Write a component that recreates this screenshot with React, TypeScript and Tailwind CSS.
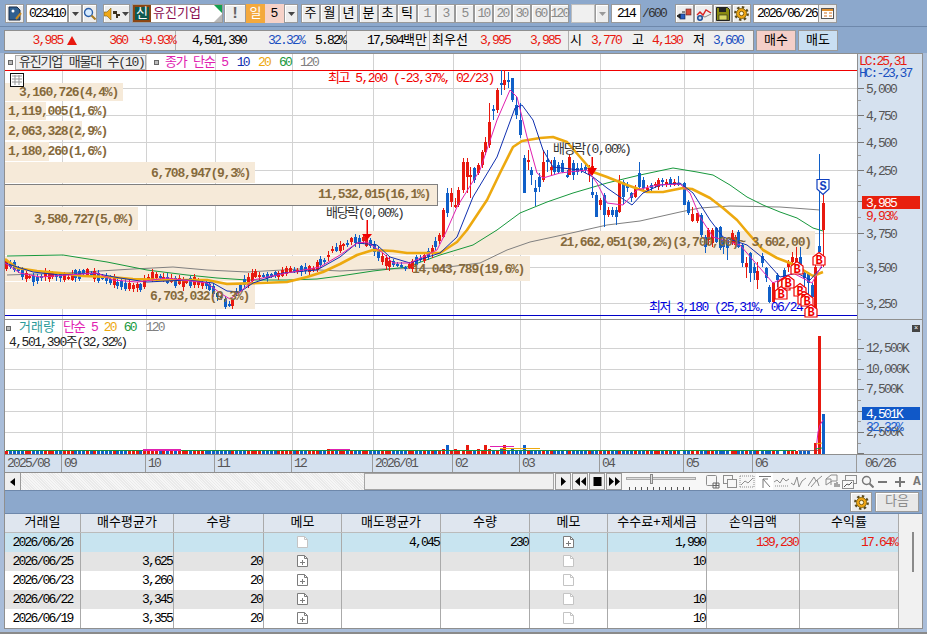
import type { ReactNode } from 'react'

type C = [number, number, number, number, number, string]

// left part of the price path, page pixels
const pricePath: [number, number][] = [[5,263],[15,268],[25,277],[35,280],[45,275],[60,276],[70,277],[85,272],[100,278],[115,283],[130,285],[140,289],[150,276],[170,281],[185,282],[195,282],[210,287],[220,297],[228,305],[233,303],[237,290],[245,281],[255,275],[265,277],[275,275],[290,271],[300,270],[315,267],[325,260],[333,250],[345,243],[355,240],[365,240],[370,243],[378,255],[385,263],[395,265],[405,268],[415,263],[425,257],[432,250],[440,238]]

const midCandles: C[] = [[310,450,530,445,535,'r'],[322,400,460,385,470,'b'],[333,400,425,385,440,'r'],[345,435,440,415,445,'r'],[355,390,435,380,440,'r'],[368,305,390,295,400,'r'],[380,305,350,295,400,'r'],[391,345,350,320,415,'r'],[402,325,360,320,370,'b'],[413,315,340,310,345,'r'],[425,275,315,270,325,'r'],[436,245,275,230,285,'r'],[448,185,255,130,265,'r'],[460,148,152,135,180,'b'],[471,90,150,85,160,'r'],[482,68,74,30,105,'b'],[493,60,75,30,90,'r'],[505,60,64,35,85,'b'],[517,55,120,55,125,'b'],[529,135,165,110,178,'b'],[541,180,225,130,235,'b'],[551,295,400,285,400,'b'],[563,300,305,270,330,'r'],[574,330,345,320,375,'b'],[586,385,395,360,437,'b'],[598,350,380,340,395,'b'],[610,305,360,270,365,'r'],[620,300,304,270,335,'b'],[632,320,330,300,345,'r'],[642,300,335,290,345,'b'],[654,315,335,305,340,'b'],[667,310,335,300,340,'b'],[680,345,350,330,355,'b'],[688,290,345,285,345,'r'],[700,310,345,300,360,'b'],[712,325,335,310,345,'b'],[724,325,330,310,340,'b'],[736,320,330,310,340,'b'],[748,320,345,315,365,'r'],[757,318,325,290,345,'r'],[757,395,405,355,415,'b'],[769,405,470,395,470,'b'],[780,420,435,415,450,'r'],[793,405,465,400,500,'b'],[805,450,465,440,470,'r'],[817,450,465,440,470,'b'],[827,450,470,440,495,'b'],[838,365,455,345,460,'r'],[850,365,410,360,435,'b'],[862,375,385,365,395,'b'],[874,400,415,395,425,'b'],[886,380,410,375,415,'r'],[896,340,380,305,390,'b'],[908,360,385,350,395,'b'],[920,385,390,375,400,'r'],[932,375,385,370,395,'b'],[945,372,378,365,385,'r'],[955,360,380,355,390,'r'],[967,360,366,355,380,'b'],[978,365,375,358,380,'r'],[990,358,375,352,380,'b'],[1002,365,375,358,378,'r'],[1013,370,373,348,378,'b']]

const endCandles: C[] = [[12,160,225,155,225,'b'],[25,215,250,210,255,'b'],[37,252,272,232,275,'r'],[50,250,272,248,278,'r'],[62,255,315,250,320,'b'],[74,320,350,315,368,'b'],[85,300,330,295,345,'r'],[95,300,340,295,350,'r'],[107,295,335,290,340,'b'],[119,290,355,288,360,'b'],[130,330,352,325,372,'b'],[142,330,355,325,390,'b'],[155,310,340,300,345,'r'],[165,320,345,315,350,'r'],[175,305,350,300,355,'b'],[187,345,400,340,412,'b'],[198,400,410,380,445,'r'],[210,370,430,365,455,'b'],[222,410,430,400,450,'b'],[232,422,450,395,478,'r'],[245,378,400,370,410,'b'],[257,415,445,410,455,'b'],[268,470,515,465,520,'b'],[280,460,515,455,520,'r'],[291,435,450,430,470,'b'],[313,420,440,415,455,'b'],[325,395,410,390,425,'r'],[337,380,395,365,410,'r'],[349,385,400,350,430,'r'],[361,380,420,350,430,'b'],[373,430,445,425,470,'b'],[385,430,460,425,500,'b'],[395,465,500,460,510,'b'],[406,410,540,405,545,'r'],[418,348,365,72,390,'b'],[430,220,300,190,410,'r']]

function interp(x: number) {
  for (let i = 1; i < pricePath.length; i++) {
    const [x0, y0] = pricePath[i - 1]
    const [x1, y1] = pricePath[i]
    if (x <= x1) return y0 + ((y1 - y0) * (x - x0)) / (x1 - x0)
  }
  return pricePath[pricePath.length - 1][1]
}

function buildCandles() {
  let seed = 17
  const rnd = () => {
    seed = (seed * 9301 + 49297) % 233280
    return seed / 233280
  }
  const out: { x: number; top: number; bot: number; hi: number; lo: number; c: string }[] = []
  for (let i = 0; i < 114; i++) {
    const x = 6.4 + 3.83 * i
    const mid = interp(x) + (rnd() - 0.5) * 3
    const h = 1 + Math.floor(rnd() * 4)
    out.push({ x, top: mid - h, bot: mid + h, hi: mid - h - 1 - rnd() * 3, lo: mid + h + 1 + rnd() * 3, c: rnd() > 0.5 ? 'r' : 'b' })
  }
  midCandles.forEach(([X, t, b, hi, lo, c]) => out.push({ x: 340 + X / 3, top: 60 + t / 3, bot: 60 + b / 3, hi: 60 + hi / 3, lo: 60 + lo / 3, c }))
  endCandles.forEach(([X, t, b, hi, lo, c]) => out.push({ x: 680 + X / 3, top: 130 + t / 3, bot: 130 + b / 3, hi: 130 + hi / 3, lo: 130 + lo / 3, c }))
  return out
}

const candles = buildCandles()
const RED = '#e8190f'
const BLUE = '#1060c8'

const ma5 = '5,263 20,273 40,277 67,275 97,273 113,280 137,282 167,278 207,283 220,293 230,299 240,292 253,280 287,273 320,267 340,255 357,243 367,242 383,253 393,263 410,263 437,250 447,230 457,207 480,170 497,120 510,90 517,97 527,137 537,173 543,178 560,173 587,170 597,183 607,203 623,205 637,190 657,185 680,184 690,193 700,217 713,237 740,245 753,260 773,283 793,273 812,283 822,265'
const ma10 = '5,263 33,272 60,275 93,273 120,278 147,282 187,280 213,283 227,291 240,292 253,283 283,273 317,270 340,257 357,243 377,245 390,257 410,263 440,253 457,237 473,197 497,157 515,108 522,105 533,120 543,150 553,167 580,170 593,177 607,188 620,197 632,205 643,193 660,185 680,183 693,193 710,220 723,237 747,245 763,258 780,277 797,273 810,280 822,267'
const ma20 = '5,259 17,268 37,271 60,273 83,276 110,277 133,279 167,280 207,280 227,284 260,283 287,282 307,277 323,272 340,264 357,255 373,250 393,251 407,253 440,253 457,242 467,230 487,200 500,173 513,147 522,141 540,138 553,137 567,142 580,157 593,172 607,177 627,185 647,192 663,192 683,188 692,189 710,198 723,208 737,220 748,233 763,250 777,258 790,263 803,270 813,276 823,272'
const ma60 = '7,256 63,255 107,262 147,270 187,275 217,278 247,280 287,280 317,279 340,276 373,271 407,267 440,255 473,245 497,230 520,213 547,202 573,193 607,183 640,175 673,168 697,172 713,175 730,185 747,197 763,205 780,212 797,218 813,228 823,231'
const ma120 = '7,275 67,273 100,271 133,269 173,267 207,270 247,272 300,269 340,271 383,269 440,268 480,263 507,250 530,242 567,234 607,225 640,221 680,212 700,208 730,206 780,207 820,210'

const vLines = [62, 146, 215, 292, 373, 453, 520, 600, 684, 753]
const priceTicks: [number, string][] = [[88, '5,000'], [115, '4,750'], [142, '4,500'], [170, '4,250'], [233, '3,750'], [267, '3,500'], [303, '3,250']]
const bands: [number, number, number, number][] = [[5, 83, 118, 18], [5, 102, 41, 18], [5, 121, 77, 19], [5, 142, 44, 19], [5, 162, 250, 21], [5, 207, 133, 23], [5, 231, 810, 24], [5, 256, 525, 25], [5, 282, 250, 27]]
const volLabels: [number, number, string][] = [
  [19, 96, '3,160,726(4,4%)'], [8, 115, '1,119,005(1,6%)'], [8, 135, '2,063,328(2,9%)'], [8, 155, '1,180,260(1,6%)'],
  [151, 177, '6,708,947(9,3%)'], [318, 198, '11,532,015(16,1%)'], [34, 223, '3,580,727(5,0%)'],
  [560, 246, '21,662,051(30,2%)(3,700,00)~ 3,602,00)'], [412, 273, '14,043,789(19,6%)'], [150, 300, '6,703,032(9,3%)'],
]
const buyMarks: [number, number][] = [[784, 284], [788, 282], [781, 293], [797, 268], [800, 290], [804, 298], [807, 300], [811, 311], [819, 259]]

function Btn({ w, children, muted, className }: { w: string; children?: ReactNode; muted?: boolean; className?: string }) {
  return (
    <div className={`${w} ${className ?? ''} flex h-[19px] shrink-0 items-center justify-center border border-[#9a9a9a] bg-[#ededed] shadow-[inset_1px_1px_0_#fff] ${muted ? 'text-[#8a8a8a]' : 'text-black'}`}>
      {children}
    </div>
  )
}

function Caret({ muted }: { muted?: boolean }) {
  return (
    <svg width="7" height="4" viewBox="0 0 7 4">
      <path d="M0 0h7L3.500 4z" fill={muted ? '#999' : '#444'} />
    </svg>
  )
}

function Gear() {
  return (
    <svg width="15" height="15" viewBox="0 0 15 15">
      <circle cx="7.500" cy="7.500" r="6.200" fill="none" stroke="#5a4a20" strokeWidth="2.400" strokeDasharray="2.400 2.400" />
      <circle cx="7.500" cy="7.500" r="5" fill="#f4a814" stroke="#8a6a10" />
      <circle cx="7.500" cy="7.500" r="2.200" fill="#fff6d8" stroke="#7a5a10" />
    </svg>
  )
}

function DocIcon({ plus, faint }: { plus?: boolean; faint?: boolean }) {
  const stroke = faint ? '#c4c4c4' : '#7d7d7d'
  return (
    <svg width="11" height="12" viewBox="0 0 11 12" className="mx-auto mt-[3px] block">
      <path d="M.5.5h7l3 3v8H.5z" fill="#fff" stroke={stroke} />
      <path d="M7.500.5v3h3" fill="none" stroke={stroke} />
      {plus && <path d="M5.500 5v5M3 7.500h5" stroke={stroke} />}
    </svg>
  )
}

function Toolbar() {
  return (
    <div className="flex h-[27px] items-start border-b border-[#6e88ab] pt-1 pl-[5px]">
      <Btn w="w-[19px]">
        <svg width="14" height="15" viewBox="0 0 14 15">
          <path d="M1 1h8l3 3v10H1z" fill="#2f5f8f" stroke="#1c2f4a" />
          <circle cx="5" cy="5" r="1.500" fill="#fff" />
          <path d="M8 13l5-6" stroke="#c88a20" strokeWidth="2" />
        </svg>
      </Btn>
      <div className="ml-[2px] flex h-[19px] w-[42px] items-center justify-center border border-[#9a9a9a] bg-white tracking-[-1.8px]">023410</div>
      <Btn w="w-[14px]"><Caret /></Btn>
      <Btn w="w-[15px]">
        <svg width="13" height="13" viewBox="0 0 13 13">
          <circle cx="5.500" cy="5.500" r="4" fill="#d8ecff" stroke="#2a5ea8" strokeWidth="1.400" />
          <path d="M8.500 8.500l4 4" stroke="#a87a20" strokeWidth="2" />
        </svg>
      </Btn>
      <Btn w="w-[27px]" className="ml-[6px] gap-[2px]">
        <svg width="16" height="12" viewBox="0 0 16 12">
          <path d="M0 4h3l4-4v12L3 8H0z" fill="#f0a818" stroke="#7a5a10" strokeWidth=".6" />
          <path d="M9 3h4v3h3v2h-2v2h-2V6H9z" fill="#3a3020" />
        </svg>
        <Caret />
      </Btn>
      <div className="ml-[2px] flex h-[19px] w-[91px] shrink-0 border border-[#9a9a9a] bg-white">
        <div className="flex w-[18px] items-center justify-center border-2 border-[#8b4513] bg-[#0f5a50] leading-none text-white">신</div>
        <div className="relative flex-1 pl-[2px] leading-[17px] text-[#8a0f52]">
          유진기업
          <div className="absolute top-0 right-0 size-0 border-t-[8px] border-l-[8px] border-t-[#12a050] border-l-transparent" />
          <div className="absolute right-0 bottom-0 size-0 border-b-[8px] border-l-[8px] border-b-[#b8b8b8] border-l-transparent" />
        </div>
      </div>
      <Btn w="w-[22px]" className="ml-[1px]"><span className="text-[16px] font-bold text-[#666]">!</span></Btn>
      <div className="flex h-[19px] w-[19px] items-center justify-center bg-[#f4a93c] text-white">일</div>
      <div className="flex h-[19px] w-[19px] items-center justify-center bg-[#f6d2c8]">5</div>
      <Btn w="w-[14px]"><Caret /></Btn>
      <Btn w="w-[19px]" className="ml-[3px]">주</Btn>
      <Btn w="w-[19px]">월</Btn>
      <Btn w="w-[19px]">년</Btn>
      <Btn w="w-[19px]" className="ml-[1px]">분</Btn>
      <Btn w="w-[19px]">초</Btn>
      <Btn w="w-[20px]">틱</Btn>
      {['1', '3', '5', '10', '20', '30', '60', '120'].map((n) => (
        <Btn key={n} w="w-[19px] tracking-[-1.8px]" muted>{n}</Btn>
      ))}
      <div className="ml-[2px] h-[19px] w-[24px] border border-[#bdbdbd] bg-[#f0f0f0]" />
      <Btn w="w-[14px]"><Caret muted /></Btn>
      <div className="ml-[2px] flex h-[19px] w-[30px] items-center justify-center border border-[#9a9a9a] bg-white tracking-[-1.8px]">214</div>
      <span className="ml-[1px] w-[33px] leading-[19px] tracking-[-1.8px] text-[#333]">/600</span>
      <Btn w="w-[19px]">
        <svg width="16" height="14" viewBox="0 0 16 14">
          <rect x="9" y="2" width="5" height="6" fill="#d84a3a" stroke="#602020" strokeWidth=".6" />
          <rect x="3" y="7" width="5" height="5" fill="#2a5ec0" stroke="#102050" strokeWidth=".6" />
          <path d="M0 9l3-2v4zM8 5l-3 0" fill="#222" stroke="#222" />
        </svg>
      </Btn>
      <Btn w="w-[19px]">
        <svg width="16" height="14" viewBox="0 0 16 14">
          <path d="M1 8l3-3 3 3 3-5 5 3" fill="none" stroke="#d82020" strokeWidth="1.400" />
          <path d="M1 11l4-2 4 1 6-3" fill="none" stroke="#888" />
          <circle cx="4" cy="11" r="3" fill="#1e4f9a" />
          <path d="M2.500 11h3M4 9.500v3" stroke="#fff" />
        </svg>
      </Btn>
      <Btn w="w-[19px]" className="!bg-[#d8d8d8]">
        <svg width="14" height="14" viewBox="0 0 14 14">
          <path d="M.5.5h11l2 2v11H.5z" fill="#8a8a10" stroke="#222" />
          <rect x="3" y="1" width="7" height="4" fill="#222" />
          <rect x="3" y="8" width="8" height="5" fill="#d8d860" stroke="#222" strokeWidth=".6" />
        </svg>
      </Btn>
      <Btn w="w-[19px]"><Gear /></Btn>
      <div className="ml-[2px] flex h-[19px] w-[84px] items-center border border-[#9a9a9a] bg-white pl-[3px] tracking-[-1.8px]">
        2026/06/26
        <div className="ml-auto flex h-[17px] w-[18px] items-center justify-center border-l border-[#9a9a9a] bg-[#ededed]">
          <svg width="13" height="11" viewBox="0 0 13 11">
            <rect x=".5" y=".5" width="12" height="10" fill="#fff" stroke="#555" />
            <rect x="1" y="1" width="11" height="2" fill="#e09030" />
            <path d="M3 5h3M8 5h3M3 8h3M8 8h3" stroke="#d07020" />
          </svg>
        </div>
      </div>
    </div>
  )
}

function QuoteBar() {
  return (
    <div className="mt-[3px] ml-1 flex h-[21px] items-stretch leading-[19px] tracking-[-1.8px]">
      <div className="flex w-[750px] border border-[#8f8f8f] bg-[#efefef]">
        <div className="flex w-[171px] items-center border-r border-[#b0b0b0]">
          <span className="w-[59px] text-right text-[#e8190f]">3,985</span>
          <div className="mr-[1px] ml-[4px] size-0 border-x-[5px] border-b-[9px] border-x-transparent border-b-[#e8190f]" />
          <span className="w-[51px] text-right text-[#e8190f]">360</span>
          <span className="w-[49px] text-right text-[#e8190f]">+9.93%</span>
        </div>
        <div className="flex w-[171px] border-r border-[#b0b0b0]">
          <span className="w-[70px] text-right">4,501,390</span>
          <span className="w-[58px] text-right text-[#1a50c0]">32.32%</span>
          <span className="w-[41px] text-right">5.82%</span>
        </div>
        <div className="flex w-[83px] border-r border-[#b0b0b0]">
          <span className="w-[80px] text-right">17,504<span className="tracking-normal">백만</span></span>
        </div>
        <div className="flex w-[139px] border-r border-[#b0b0b0]">
          <span className="ml-[2px] w-[44px] tracking-normal">최우선</span>
          <span className="w-[34px] text-right text-[#e8190f]">3,995</span>
          <span className="w-[50px] text-right text-[#e8190f]">3,985</span>
        </div>
        <div className="flex">
          <span className="ml-[1px] w-[13px] tracking-normal">시</span>
          <span className="w-[38px] text-right text-[#e8190f]">3,770</span>
          <span className="ml-[11px] w-[13px] tracking-normal">고</span>
          <span className="w-[37px] text-right text-[#e8190f]">4,130</span>
          <span className="ml-[11px] w-[13px] tracking-normal">저</span>
          <span className="w-[37px] text-right text-[#1a50c0]">3,600</span>
        </div>
      </div>
      <div className="ml-[2px] flex w-[40px] items-center justify-center border border-[#9a9a9a] bg-[#f4cfc8] tracking-normal">매수</div>
      <div className="ml-[2px] flex w-[40px] items-center justify-center border border-[#9a9a9a] bg-[#c9dff2] tracking-normal">매도</div>
    </div>
  )
}

function PricePane() {
  return (
    <div className="flex h-[266px] border-b border-[#8f8f8f]">
      <div className="relative w-[852px] bg-white">
        <svg width="852" height="265" viewBox="5 54 852 265" className="absolute inset-0">
          {vLines.map((x) => <line key={x} x1={x + 0.5} x2={x + 0.5} y1="54" y2="319" stroke="#d2d2d2" strokeWidth="1" />)}
          {[88, 115, 142, 170, 201, 233, 267, 303].map((y) => <line key={y} x1="5" x2="857" y1={y + 0.5} y2={y + 0.5} stroke="#d2d2d2" />)}
          {bands.map(([x, y, w, h], i) => <rect key={i} x={x} y={y} width={w} height={h} fill="#f6ead9" />)}
          <rect x="4" y="184.500" width="433.500" height="21" fill="#f6ead9" stroke="#808080" />
          <line x1="5" x2="857" y1="70.500" y2="70.500" stroke="#f00000" />
          <line x1="5" x2="857" y1="315.500" y2="315.500" stroke="#0000c8" />
          <polyline points={ma120} fill="none" stroke="#808080" />
          <polyline points={ma60} fill="none" stroke="#17983c" />
          <g shapeRendering="crispEdges">
            {candles.map((k, i) => {
              const x = Math.round(k.x)
              const fill = k.c === 'r' ? RED : BLUE
              return (
                <g key={i}>
                  <rect x={x} y={k.hi} width="1" height={k.lo - k.hi} fill={fill} />
                  <rect x={x - 1} y={k.top} width="3" height={Math.max(2, k.bot - k.top)} fill={fill} />
                </g>
              )
            })}
          </g>
          <polyline points={ma20} fill="none" stroke="#eda90f" strokeWidth="2.600" strokeLinejoin="round" />
          <polyline points={ma10} fill="none" stroke="#1030b0" />
          <polyline points={ma5} fill="none" stroke="#e020b0" />
          {volLabels.map(([x, y, t]) => (
            <text key={t} x={x} y={y} fill="#866a3c" fontWeight="700" className="tracking-[-1.2px]">{t}</text>
          ))}
          <text x="328" y="82" fill="#f00000" className="tracking-[-1.5px]">최고 5,200 (-23,37%, 02/23)</text>
          <text x="326" y="217" fill="#333" className="tracking-[-1.3px]">배당락(0,00%)</text>
          <text x="553" y="153" fill="#333" className="tracking-[-1.3px]">배당락(0,00%)</text>
          <text x="649" y="311" fill="#0000e0" className="tracking-[-1.5px]">최저 3,180 (25,31%, 06/24)</text>
          <path d="M366.500 220h1.500v14h4l-5 6-5-6h4.500z" fill="#f00000" />
          <path d="M591.500 157h1.500v11h4l-5 8-5-8h4.500z" fill="#f00000" />
          {buyMarks.map(([x, y], i) => (
            <g key={i}>
              <path d={`M${x} ${y - 6.5}l6 4.500v8h-12v-8z`} fill="#fff" stroke="#f00000" strokeWidth="1.200" />
              <text x={x} y={y + 5} textAnchor="middle" fill="#f00000" fontSize="12" fontWeight="700" className="tracking-normal">B</text>
            </g>
          ))}
          <path d="M817 179.500h12v9.500l-6 5.500-6-5.500z" fill="#fff" stroke="#1040c0" strokeWidth="1.200" />
          <text x="823" y="190" textAnchor="middle" fill="#1040c0" fontSize="12" fontWeight="700" className="tracking-normal">S</text>
          <rect x="10.500" y="73.500" width="13" height="13" fill="#fff" stroke="#111" />
          <path d="M12 76h10M12 79h10M12 82h10M15 75v10M19 75v10" stroke="#999" />
        </svg>
        <div className="absolute top-px left-[3px] flex items-center leading-[15px]">
          <div className="size-[5px] border border-[#666] bg-[#bbb]" />
          <div className="ml-[2px] flex h-[15px] w-[131px] items-center border border-[#aaa] bg-[#efefef] pl-[3px] tracking-[-1.2px] text-[#333]">유진기업 매물대 수(10)</div>
          <div className="ml-[8px] size-[5px] border border-[#666] bg-[#bbb]" />
          <span className="ml-[6px] tracking-[-1.2px] text-[#e020b0]">종가 단순 5</span>
          <span className="ml-[9px] tracking-[-1.8px] text-[#1030b0]">10</span>
          <span className="ml-[9px] tracking-[-1.8px] text-[#eda90f]">20</span>
          <span className="ml-[9px] tracking-[-1.8px] text-[#17983c]">60</span>
          <span className="ml-[9px] tracking-[-1.8px] text-[#808080]">120</span>
        </div>
      </div>
      <div className="w-[65px] border-l border-[#8f8f8f] bg-[#d5e1ef]">
        <svg width="64" height="265" viewBox="858 54 64 265">
          {[88, 115, 142, 170, 201, 233, 267, 303].map((y) => <line key={y} x1="858" x2="864" y1={y + 0.5} y2={y + 0.5} stroke="#777" />)}
          {[100, 128, 155, 185, 217, 250, 285].map((y) => <line key={y} x1="858" x2="861" y1={y + 0.5} y2={y + 0.5} stroke="#999" />)}
          <text x="859" y="65" fill="#e8190f" fontSize="13" className="tracking-[-2px]">LC:25,31</text>
          <text x="859" y="77" fill="#1a50c0" fontSize="13" className="tracking-[-2px]">HC:-23,37</text>
          {priceTicks.map(([y, t]) => <text key={t} x="866" y={y + 5} fill="#555" className="tracking-[-1.8px]">{t}</text>)}
          <rect x="862" y="196" width="58" height="13" fill="#e8200e" />
          <text x="866" y="207" fill="#fff" className="tracking-[-1.8px]">3,985</text>
          <text x="866" y="220" fill="#e8190f" className="tracking-[-1.8px]">9,93%</text>
        </svg>
      </div>
    </div>
  )
}

function VolumePane() {
  return (
    <div className="flex h-[134px]">
      <div className="relative w-[852px] bg-white">
        <svg width="852" height="134" viewBox="5 320 852 134" className="absolute inset-0">
          {vLines.map((x) => <line key={x} x1={x + 0.5} x2={x + 0.5} y1="320" y2="454" stroke="#d2d2d2" />)}
          {[348, 369, 389, 411, 432].map((y) => <line key={y} x1="5" x2="857" y1={y + 0.5} y2={y + 0.5} stroke="#d2d2d2" />)}
          <g shapeRendering="crispEdges">
            {candles.slice(0, -4).map((k, i) => {
              const x = Math.round(k.x)
              const bump = x > 440 && x < 530 ? (i % 5 === 0 ? 6 : i % 3 === 0 ? 2 : 0) : x > 310 && x < 345 && i % 6 === 0 ? 2 : 0
              return <rect key={i} x={x - 1} y={451 - bump} width="3" height={3 + bump} fill={k.c === 'r' ? RED : BLUE} />
            })}
            <rect x="6" y="450" width="790" height="1" fill="#17983c" />
            <rect x="143" y="449" width="38" height="2" fill="#e020b0" />
            <rect x="330" y="449" width="20" height="1" fill="#e020b0" />
            <rect x="490" y="446" width="24" height="1" fill="#e020b0" />
            <rect x="500" y="448" width="40" height="1" fill="#eda90f" />
            <rect x="798" y="450" width="20" height="1" fill="#808080" />
            <rect x="814" y="443" width="3" height="11" fill={RED} />
            <rect x="818" y="336" width="3" height="118" fill={RED} />
            <rect x="822" y="414" width="3" height="40" fill={BLUE} />
          </g>
          <polyline points="816,450 818,432 820,425 823,420" fill="none" stroke="#e020b0" />
          <line x1="816" x2="822" y1="444" y2="443" stroke="#eda90f" />
          <line x1="815" x2="822" y1="449" y2="448" stroke="#17983c" />
        </svg>
        <div className="absolute top-px left-[1px] flex items-center leading-[14px]">
          <div className="size-[5px] border border-[#666] bg-[#bbb]" />
          <span className="ml-[8px] text-[#2a9a9a]">거래량</span>
          <span className="ml-[8px] tracking-[-1.2px] text-[#e020b0]">단순 5</span>
          <span className="ml-[6px] tracking-[-1.8px] text-[#eda90f]">20</span>
          <span className="ml-[8px] tracking-[-1.8px] text-[#17983c]">60</span>
          <span className="ml-[10px] tracking-[-1.8px] text-[#808080]">120</span>
        </div>
        <div className="absolute top-[16px] left-[4px] leading-[14px] tracking-[-1.5px] text-[#222]">4,501,390주(32,32%)</div>
      </div>
      <div className="relative w-[65px] border-l border-[#8f8f8f] bg-[#d5e1ef]">
        <svg width="64" height="134" viewBox="858 320 64 134">
          {[348, 369, 389, 411, 432, 453].map((y) => <line key={y} x1="858" x2="864" y1={y + 0.5} y2={y + 0.5} stroke="#777" />)}
          {[339, 359, 379, 400, 421, 443].map((y) => <line key={y} x1="858" x2="861" y1={y + 0.5} y2={y + 0.5} stroke="#999" />)}
          <text x="866" y="352" fill="#555" className="tracking-[-1.8px]">12,500K</text>
          <text x="866" y="373" fill="#555" className="tracking-[-1.8px]">10,000K</text>
          <text x="866" y="393" fill="#555" className="tracking-[-1.8px]">7,500K</text>
          <text x="866" y="436" fill="#555" className="tracking-[-1.8px]">2,500K</text>
          <rect x="862" y="407" width="58" height="13" fill="#1058c8" />
          <text x="866" y="418" fill="#fff" className="tracking-[-1.8px]">4,501K</text>
          <text x="866" y="431" fill="#1a60d0" className="tracking-[-1.8px]">32,32%</text>
        </svg>
        <div className="absolute top-[5px] right-[2px] flex h-[7px] w-[8px] items-center justify-center bg-[#444] text-[7px] leading-none text-white">×</div>
      </div>
    </div>
  )
}

function DateAxis() {
  const ticks = [
    ['w-[57px]', '2025/08'], ['w-[84px]', '09'], ['w-[69px]', '10'], ['w-[77px]', '11'], ['w-[81px]', '12'],
    ['w-[80px]', '2026/01'], ['w-[67px]', '02'], ['w-[80px]', '03'], ['w-[84px]', '04'], ['w-[69px]', '05'], ['w-[104px]', '06'],
  ]
  return (
    <div className="flex h-[19px] border-y border-[#8f8f8f] bg-[#d5e1ef] leading-[17px] tracking-[-1.8px] text-[#555]">
      {ticks.map(([w, t]) => (
        <div key={t} className={`${w} border-r border-[#9a9a9a] pl-[2px]`}>{t}</div>
      ))}
      <div className="pl-[8px]">06/26</div>
    </div>
  )
}

function ToolIcon({ children, w = 'w-[17px]' }: { children: ReactNode; w?: string }) {
  return (
    <div className={`flex h-[17px] ${w} items-center justify-center`}>
      <svg width="16" height="15" viewBox="0 0 16 15" fill="none" stroke="#8d8d8d">{children}</svg>
    </div>
  )
}

function ScrollRow() {
  return (
    <div className="flex h-[17px] bg-[#f7f7f7]">
      <div className="flex w-[16px] items-center justify-center border-r border-[#9a9a9a] bg-[#efefef]">
        <div className="size-0 border-y-[4px] border-r-[5px] border-y-transparent border-r-black" />
      </div>
      <div className="w-[343px] bg-[repeating-linear-gradient(45deg,#f6f6f6,#f6f6f6_1px,#eaeaea_1px,#eaeaea_2px)]" />
      <div className="w-[190px] border border-[#a5a5a5] bg-[#f0f0f0]" />
      {['play', 'back', 'stop', 'next'].map((k) => (
        <div key={k} className="ml-[1px] flex w-[16px] items-center justify-center border border-[#9a9a9a] bg-[#efefef]">
          <svg width="11" height="9" viewBox="0 0 11 9" fill="#000">
            {k === 'play' && <path d="M3 0l5 4.500-5 4.500z" />}
            {k === 'back' && <path d="M5 0v9L0 4.500zM11 0v9L6 4.500z" />}
            {k === 'stop' && <rect x="1.500" y="0" width="8" height="9" />}
            {k === 'next' && <path d="M0 0v9l5-4.500zM6 0v9l5-4.500z" />}
          </svg>
        </div>
      ))}
      <div className="relative ml-[4px] w-[72px]">
        <div className="absolute top-[4px] left-0 h-[3px] w-[70px] border border-[#aaa] bg-[#ddd]" />
        <div className="absolute top-[1px] left-[24px] h-[10px] w-[3px] border border-[#888] bg-[#ddd]" />
        <div className="absolute bottom-0 left-[3px] h-[3px] w-[66px] bg-[repeating-linear-gradient(90deg,#555,#555_1px,transparent_1px,transparent_6px)]" />
      </div>
      <div className="ml-[6px] flex items-center">
        <ToolIcon><rect x="1.500" y="1.500" width="10" height="10" rx="1" /><path d="M8 9h6v5H8zM11 9v5M8 11.500h6" stroke="#666" /></ToolIcon>
        <ToolIcon><rect x="1.500" y="1.500" width="9" height="8" /><rect x="5.500" y="5.500" width="9" height="8" fill="#f7f7f7" /></ToolIcon>
        <ToolIcon><path d="M1 2h14M1 13h14M1 2v11M15 2v11" strokeDasharray="1 1" /><path d="M2 11l4-4 3 2 5-5" /></ToolIcon>
        <div className="ml-[1px] flex h-[17px] w-[17px] items-center justify-center bg-white">
          <svg width="14" height="14" viewBox="0 0 14 14" fill="none" stroke="#777"><path d="M1 1.500h12M5 13V4M5 4l7 8M5 4h5" /></svg>
        </div>
        <ToolIcon><path d="M0 8l3-2 3 3 3-5 3 3 3-2" /><path d="M1 12l14 0" strokeDasharray="1 1" /></ToolIcon>
        <ToolIcon><path d="M0 9l3 2 3-8 2 10 3-6 4-3" /></ToolIcon>
        <ToolIcon><path d="M0 12l6-9 2 4 6-5M3 13l6-7 2 6" /></ToolIcon>
        <ToolIcon><path d="M1 5l5-4h6v6H7L1 11zM1 5h5v6" /><path d="M10 13V9M12 13V8M14 13v-3" stroke="#555" /></ToolIcon>
        <ToolIcon><rect x="3.500" y="1.500" width="11" height="8" /><rect x=".5" y="6.500" width="11" height="8" fill="#f7f7f7" /><path d="M2 13l3-3 2 1 3-3" stroke="#555" /></ToolIcon>
        <div className="ml-[2px] flex w-[15px] items-center justify-center">
          <svg width="13" height="13" viewBox="0 0 13 13" fill="none" stroke="#777" strokeWidth="1.400"><circle cx="5.500" cy="5.500" r="4" /><path d="M8.500 8.500l4 4" strokeWidth="2" /></svg>
        </div>
        <div className="ml-[3px] h-[2px] w-[9px] bg-[#777]" />
        <div className="relative ml-[8px] size-[10px]">
          <div className="absolute top-[4px] left-0 h-[2px] w-[10px] bg-[#777]" />
          <div className="absolute top-0 left-[4px] h-[10px] w-[2px] bg-[#777]" />
        </div>
        <span className="ml-[8px] leading-none font-bold text-[#777]">A</span>
      </div>
    </div>
  )
}

const colW = ['w-[76px]', 'w-[93px]', 'w-[90px]', 'w-[78px]', 'w-[99px]', 'w-[89px]', 'w-[78px]', 'w-[99px]', 'w-[93px]', 'w-[99px]']
const heads = ['거래일', '매수평균가', '수량', '메모', '매도평균가', '수량', '메모', '수수료+제세금', '손익금액', '수익률']
const rows = [
  { d: '2026/06/26', bp: '', bq: '', bm: 'blank', sp: '4,045', sq: '230', sm: 'plus', fee: '1,990', pl: '139,230', r: '17.64%', bg: 'bg-[#c8e4f0]' },
  { d: '2026/06/25', bp: '3,625', bq: '20', bm: 'plus', sp: '', sq: '', sm: 'faint', fee: '10', pl: '', r: '', bg: 'bg-[#e4e4e4]' },
  { d: '2026/06/23', bp: '3,260', bq: '20', bm: 'plus', sp: '', sq: '', sm: 'faint', fee: '', pl: '', r: '', bg: 'bg-white' },
  { d: '2026/06/22', bp: '3,345', bq: '20', bm: 'plus', sp: '', sq: '', sm: 'faint', fee: '10', pl: '', r: '', bg: 'bg-[#e4e4e4]' },
  { d: '2026/06/19', bp: '3,355', bq: '20', bm: 'plus', sp: '', sq: '', sm: 'faint', fee: '10', pl: '', r: '', bg: 'bg-white' },
]

function Memo({ kind }: { kind: string }) {
  if (kind === 'plus') return <DocIcon plus />
  return <DocIcon faint />
}

function Cell({ i, children, red }: { i: number; children?: ReactNode; red?: boolean }) {
  return (
    <div className={`${colW[i]} shrink-0 border-r border-[#aaa] pr-[1px] text-right leading-[19px] tracking-[-1.8px] ${red ? 'text-[#e8190f]' : ''}`}>
      {children}
    </div>
  )
}

function TradeTable() {
  return (
    <div className="flex">
      <div>
        <div className="flex h-[19px] border-b border-[#bbb] bg-[#dfe6ef]">
          {heads.map((h, i) => (
            <div key={i} className={`${colW[i]} shrink-0 border-r border-[#aaa] text-center leading-[18px]`}>{h}</div>
          ))}
        </div>
        {rows.map((r) => (
          <div key={r.d} className={`flex h-[19px] ${r.bg}`}>
            <div className={`${colW[0]} shrink-0 border-r border-[#aaa] text-center leading-[19px] tracking-[-1.8px]`}>{r.d}</div>
            <Cell i={1}>{r.bp}</Cell>
            <Cell i={2}>{r.bq}</Cell>
            <div className={`${colW[3]} shrink-0 border-r border-[#aaa]`}><Memo kind={r.bm} /></div>
            <Cell i={4}>{r.sp}</Cell>
            <Cell i={5}>{r.sq}</Cell>
            <div className={`${colW[6]} shrink-0 border-r border-[#aaa]`}><Memo kind={r.sm} /></div>
            <Cell i={7}>{r.fee}</Cell>
            <Cell i={8} red>{r.pl}</Cell>
            <Cell i={9} red>{r.r}</Cell>
          </div>
        ))}
      </div>
      <div className="relative w-[23px] bg-[#f1f1f1]">
        <div className="absolute top-[18px] left-[13px] h-[40px] w-[2px] bg-[#8a8a8a]" />
      </div>
    </div>
  )
}

export default function App() {
  return (
    <div className="flex h-[634px] w-[927px] flex-col overflow-hidden bg-[#8ca8cc] font-['Liberation_Mono','Noto_Sans_CJK_KR',monospace] text-[13px] text-black">
      <Toolbar />
      <QuoteBar />
      <div className="mt-[2px] flex flex-1 flex-col overflow-hidden bg-[#a9bdd9] px-1">
        <div className="w-[919px] border border-[#8f8f8f] bg-white">
          <PricePane />
          <VolumePane />
          <DateAxis />
          <ScrollRow />
          <div className="flex h-[24px] items-center justify-end gap-[3px] border-y border-[#6e88ab] bg-[#8ca8cc] pr-[3px]">
            <div className="flex h-[20px] w-[22px] items-center justify-center border border-[#9a9a9a] bg-[#ededed] shadow-[inset_1px_1px_0_#fff]"><Gear /></div>
            <div className="flex h-[20px] w-[44px] items-center justify-center border border-[#9a9a9a] bg-[#e8e8e8] text-[#8a8a8a] shadow-[inset_1px_1px_0_#fff]">다음</div>
          </div>
          <TradeTable />
        </div>
      </div>
      <div className="h-[2px] bg-[#8a8a8a]" />
    </div>
  )
}
